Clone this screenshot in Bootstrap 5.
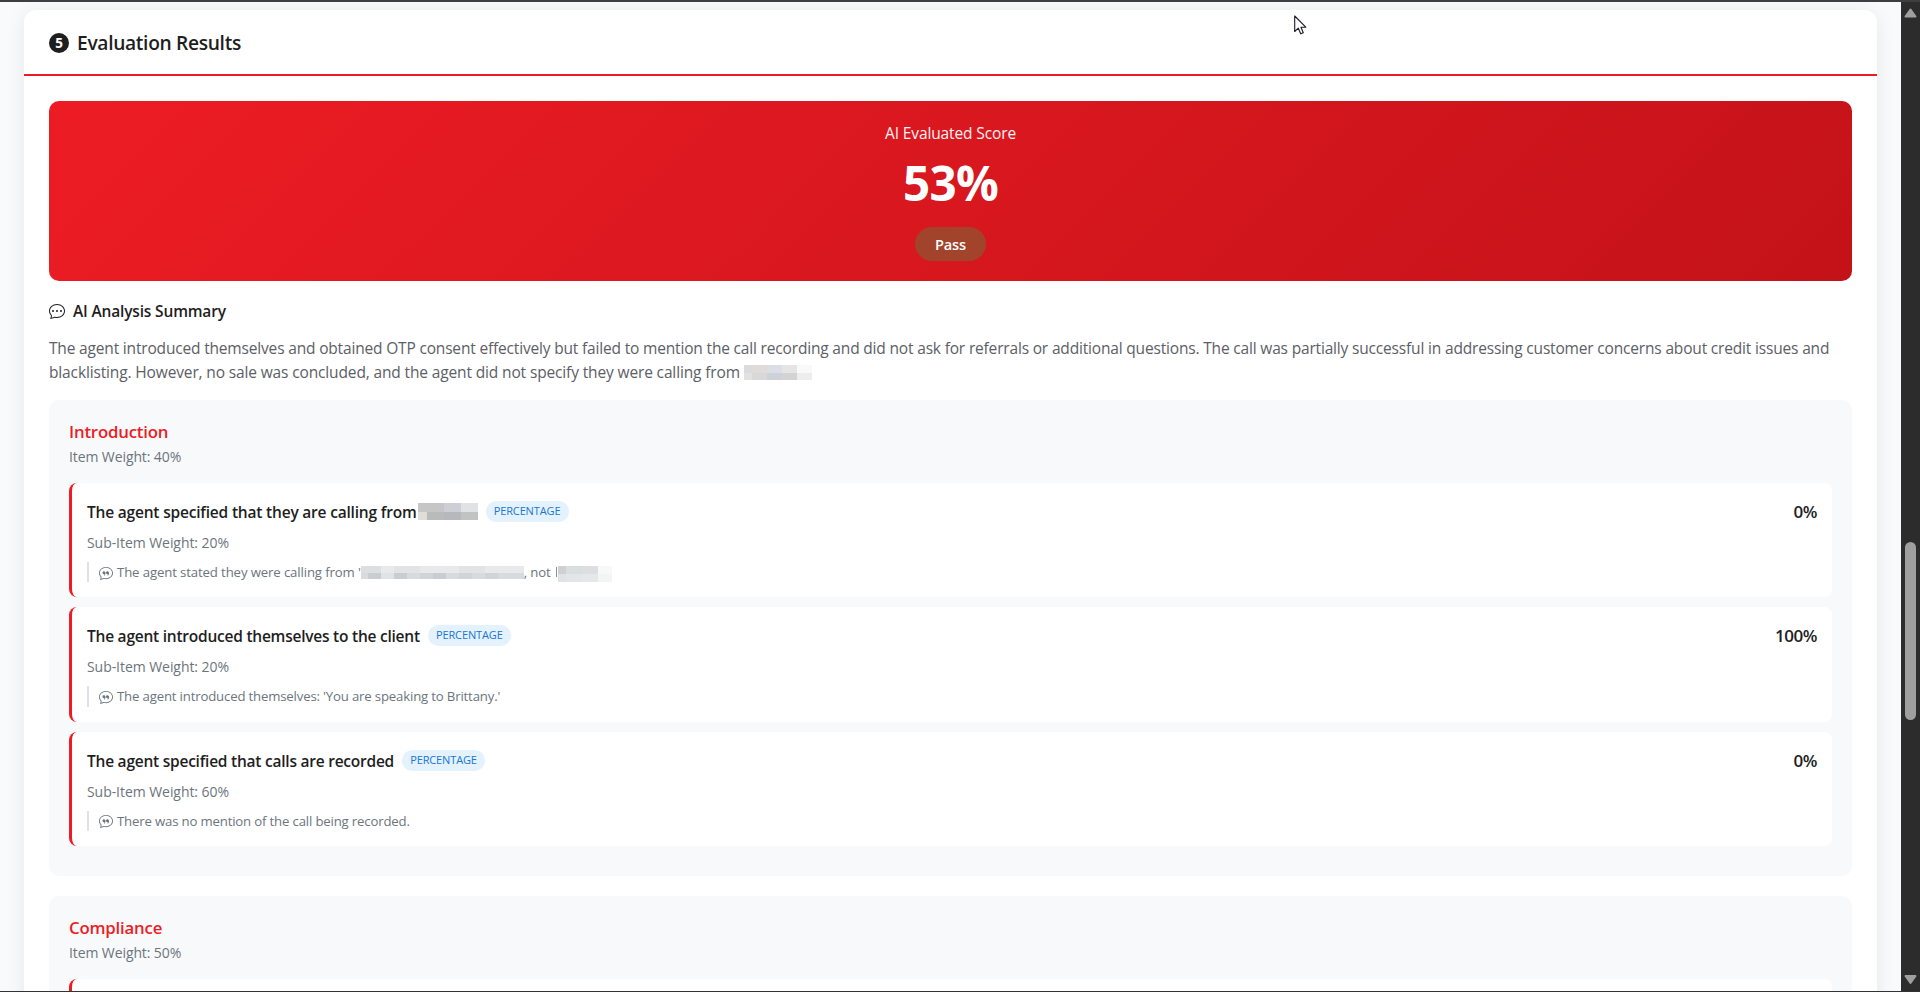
<!DOCTYPE html>
<html lang="en">
<head>
<meta charset="utf-8">
<meta name="viewport" content="width=device-width, initial-scale=1">
<title>Evaluation Results</title>
<link href="https://cdn.jsdelivr.net/npm/bootstrap@5.3.0/dist/css/bootstrap.min.css" rel="stylesheet">
<style>
:root{--brand:#ed1c24;--brand-dark:#c41219;--soft:#f8f9fb;--ink:#1e1e1e;--muted:#6c757d}
body{font-family:"Open Sans","Noto Sans",sans-serif;background:#f8fafc;color:var(--ink);height:992px;overflow:hidden;border-top:2px solid #3f3d40;border-bottom:1px solid #333}
.page-area{padding:8px 24px 0}
.results{border:0;border-radius:12px;box-shadow:0 2px 20px rgba(0,0,0,.08);height:1200px;background:#fff}
.results-head{height:66px;border-bottom:2px solid var(--brand);padding:2px 25px 0}
.step-no{width:20px;height:20px;font-size:13.5px;line-height:20px;background:var(--ink);color:#fff}
.results-title{font-size:19.2px;font-weight:600;letter-spacing:-.32px;line-height:24px}
.results-body{padding:25px}
.score{height:180px;border-radius:10px;background:linear-gradient(135deg,var(--brand) 0%,var(--brand-dark) 100%);padding-top:20px}
.score-label{font-size:15.5px;line-height:24px;letter-spacing:-.12px;opacity:.95}
.score-value{font-size:47.5px;font-weight:700;line-height:58px;letter-spacing:-.7px;margin:9px 0 15px}
.score-pill{width:71px;height:34px;line-height:34px;border-radius:17px;background:#a2442c;font-size:14.6px;font-weight:600;letter-spacing:-.15px}
.summary-title{font-size:15.5px;font-weight:600;letter-spacing:-.17px;line-height:20px;margin-top:20px}
.summary-text{font-size:15.5px;line-height:24px;color:#5c6066;letter-spacing:-.173px;margin:15px 0 16px;white-space:nowrap}
.summary-text .line-two{letter-spacing:-.139px}
.group{background:var(--soft);border-radius:10px;padding:20px 20px 30px;margin-bottom:20px}
.group-title{font-size:16.8px;font-weight:600;color:var(--brand);line-height:22px;letter-spacing:-.19px;margin:1px 0 3px}
.group-weight{font-size:14px;line-height:21px;letter-spacing:-.1px;color:var(--muted);margin-bottom:16px}
.entry{background:#fff;border-left:3px solid var(--brand);border-radius:8px;padding:15px;height:114.4px;margin-bottom:10px}
.entry:last-child{margin-bottom:0}
.entry-head{height:27px;margin-bottom:7px}
.entry-title{font-size:15.5px;font-weight:600;line-height:26px;letter-spacing:-.235px;padding-top:1px}
.entry-title.first{letter-spacing:-.193px}
.kind{height:21px;line-height:20px;border-radius:11px;background:#e3f2fd;color:#1976d2;font-size:11px;padding:0 8px;letter-spacing:-.13px;margin:3px 0 0 8px;width:83px;text-align:center}
.entry-score{font-size:17px;font-weight:600;letter-spacing:-.45px;line-height:28px}
.entry-weight{font-size:14px;line-height:21px;letter-spacing:-.055px;color:var(--muted)}
.remark{font-size:13.2px;line-height:19.4px;color:var(--muted);letter-spacing:-.17px;border-left:2px solid #dee2e6;padding:1px 0 0 10px;height:20.4px;margin-top:9px;white-space:nowrap}
.remark.redacted{letter-spacing:-.125px}
.remark svg.icon{margin-right:4px}
svg{flex:none}
.scroller{width:19px;background:#2c2c2c}
.scroller-thumb{width:11px;height:178px;border-radius:6px;background:#9f9f9f}
.pointer{left:1294px;top:13px}
</style>
</head>
<body class="d-flex m-0 position-relative">
<svg width="0" height="0" class="position-absolute">
  <symbol id="quote" viewBox="0 0 16 16">
    <path d="M2.678 11.894a1 1 0 0 1 .287.801 11 11 0 0 1-.398 2c1.395-.323 2.247-.697 2.634-.893a1 1 0 0 1 .71-.074A8 8 0 0 0 8 14c3.996 0 7-2.807 7-6s-3.004-6-7-6-7 2.808-7 6c0 1.468.617 2.83 1.678 3.894m-.493 3.905a22 22 0 0 1-.713.129c-.2.032-.352-.176-.273-.362a10 10 0 0 0 .244-.637l.003-.01c.248-.72.45-1.548.524-2.319C.743 11.37 0 9.76 0 8c0-3.866 3.582-7 8-7s8 3.134 8 7-3.582 7-8 7a9 9 0 0 1-2.347-.306c-.52.263-1.639.742-3.468 1.105"/>
    <path d="M7.066 6.76A1.665 1.665 0 0 0 4 7.668a1.667 1.667 0 0 0 2.561 1.406c-.131.389-.375.804-.777 1.22a.417.417 0 0 0 .6.58c1.486-1.54 1.293-3.214.682-4.112zm4 0A1.665 1.665 0 0 0 8 7.668a1.667 1.667 0 0 0 2.561 1.406c-.131.389-.375.804-.777 1.22a.417.417 0 0 0 .6.58c1.486-1.54 1.293-3.214.682-4.112z"/>
  </symbol>
</svg>

<main class="page-area flex-grow-1 overflow-hidden">
  <section class="card results">
    <header class="results-head d-flex align-items-center">
      <span class="step-no rounded-circle text-center fw-bold me-2">5</span>
      <h1 class="results-title mb-0">Evaluation Results</h1>
    </header>
    <div class="results-body">
      <div class="score text-white d-flex flex-column align-items-center">
        <div class="score-label">AI Evaluated Score</div>
        <div class="score-value">53%</div>
        <div class="score-pill text-center">Pass</div>
      </div>

      <h2 class="summary-title d-flex align-items-center mb-0">
        <svg class="me-2" width="16" height="16" viewBox="0 0 16 16" fill="currentColor"><path d="M5 8a1 1 0 1 1-2 0 1 1 0 0 1 2 0m4 0a1 1 0 1 1-2 0 1 1 0 0 1 2 0m3 1a1 1 0 1 0 0-2 1 1 0 0 0 0 2"/><path d="m2.165 15.803.02-.004c1.83-.363 2.948-.842 3.468-1.105A9 9 0 0 0 8 15c4.418 0 8-3.134 8-7s-3.582-7-8-7-8 3.134-8 7c0 1.76.743 3.37 1.97 4.6a10.4 10.4 0 0 1-.524 2.318l-.003.011a11 11 0 0 1-.244.637c-.079.186.074.394.273.362a22 22 0 0 0 .693-.125m.8-3.108a1 1 0 0 0-.287-.801C1.618 10.83 1 9.468 1 8c0-3.192 3.004-6 7-6s7 2.808 7 6-3.004 6-7 6a8 8 0 0 1-2.088-.272 1 1 0 0 0-.711.074c-.387.196-1.24.57-2.634.893a11 11 0 0 0 .398-2"/></svg>
        AI Analysis Summary
      </h2>
      <div class="summary-text">
        <div>The agent introduced themselves and obtained OTP consent effectively but failed to mention the call recording and did not ask for referrals or additional questions. The call was partially successful in addressing customer concerns about credit issues and</div>
        <div class="line-two d-flex align-items-center">blacklisting. However, no sale was concluded, and the agent did not specify they were calling from
          <svg class="ms-1" width="68" height="15" shape-rendering="crispEdges"><path fill="#dbdbdb" d="M0 0h8v8H0z"/><path fill="#dfdbd8" d="M8 0h15v8H8z"/><path fill="#dbdfe5" d="M23 0h15v8H23z"/><path fill="#e5e5e5" d="M38 0h15v8H38z"/><path fill="#f9f9f9" d="M53 0h15v8H53z"/><path fill="#e1e1e0" d="M0 8h8v7H0z"/><path fill="#d8d8d8" d="M8 8h15v7H8z"/><path fill="#cdd2d8" d="M23 8h15v7H23z"/><path fill="#d3d3d3" d="M38 8h15v7H38z"/><path fill="#ededee" d="M53 8h15v7H53z"/></svg>
        </div>
      </div>

      <section class="group">
        <h3 class="group-title">Introduction</h3>
        <div class="group-weight">Item Weight: 40%</div>

        <article class="entry">
          <div class="entry-head d-flex align-items-start">
            <h4 class="entry-title first mb-0">The agent specified that they are calling from</h4>
            <svg class="mt-1" style="margin-left:1px" width="60" height="19" shape-rendering="crispEdges"><g transform="translate(0 1)"><path fill="#c7c6c6" d="M0 0h26v9H0z"/><path fill="#cdced6" d="M26 0h17v9H26z"/><path fill="#e1e2e4" d="M43 0h17v9H43z"/><path fill="#e0dcda" d="M0 9h9v8H0z"/><path fill="#b9bbbb" d="M9 9h17v8H9z"/><path fill="#b7b8bc" d="M26 9h17v8H26z"/><path fill="#c0c3c2" d="M43 9h17v8H43z"/></g></svg>
            <span class="kind">PERCENTAGE</span>
            <span class="entry-score ms-auto">0%</span>
          </div>
          <div class="entry-weight">Sub-Item Weight: 20%</div>
          <div class="remark redacted d-flex align-items-center"><svg class="icon" width="14" height="14" fill="currentColor"><use href="#quote"/></svg>The agent stated they were calling from '
            <svg width="163" height="13" shape-rendering="crispEdges"><path fill="#e7e9ea" d="M0 0h163v7H0z"/><path fill="#dcdfe0" d="M0 0h20v7H0z"/><path fill="#e2e3e5" d="M33 0h26v7H33zM98 0h26v7H98z"/><path fill="#d8dadd" d="M0 7h163v6H0z"/><path fill="#c9ccd0" d="M7 7h13v6H7zM33 7h13v6H33zM72 7h13v6H72z"/><path fill="#e1e2e3" d="M20 7h13v6H20z"/><path fill="#d1d4d7" d="M59 7h13v6H59zM98 7h13v6H98zM124 7h13v6h-13z"/></svg>, not
            <svg width="60" height="18" shape-rendering="crispEdges" style="margin-left:5px"><path fill="#8c9299" d="M0 3h1v10H0z"/><g transform="translate(2 2)"><path fill="#d0d0d1" d="M0 0h8v8H0z"/><path fill="#d9dee0" d="M8 0h16v8H8z"/><path fill="#dddedf" d="M24 0h16v8H24z"/><path fill="#f7f9f9" d="M40 0h14v8H40z"/><path fill="#dfe3e4" d="M0 8h8v8H0z"/><path fill="#e1e6e9" d="M8 8h16v8H8z"/><path fill="#e6e7e8" d="M24 8h16v8H24z"/><path fill="#f3f4f4" d="M40 8h14v8H40z"/></g></svg>
          </div>
        </article>

        <article class="entry">
          <div class="entry-head d-flex align-items-start">
            <h4 class="entry-title mb-0">The agent introduced themselves to the client</h4>
            <span class="kind">PERCENTAGE</span>
            <span class="entry-score ms-auto">100%</span>
          </div>
          <div class="entry-weight">Sub-Item Weight: 20%</div>
          <div class="remark d-flex align-items-center"><svg class="icon" width="14" height="14" fill="currentColor"><use href="#quote"/></svg>The agent introduced themselves: 'You are speaking to Brittany.'</div>
        </article>

        <article class="entry">
          <div class="entry-head d-flex align-items-start">
            <h4 class="entry-title mb-0">The agent specified that calls are recorded</h4>
            <span class="kind">PERCENTAGE</span>
            <span class="entry-score ms-auto">0%</span>
          </div>
          <div class="entry-weight">Sub-Item Weight: 60%</div>
          <div class="remark d-flex align-items-center"><svg class="icon" width="14" height="14" fill="currentColor"><use href="#quote"/></svg>There was no mention of the call being recorded.</div>
        </article>
      </section>

      <section class="group">
        <h3 class="group-title">Compliance</h3>
        <div class="group-weight">Item Weight: 50%</div>
        <article class="entry"></article>
      </section>
    </div>
  </section>
</main>

<aside class="scroller d-flex flex-column align-items-center flex-shrink-0 pt-1 pb-1">
  <svg width="13" height="14" viewBox="0 0 13 14"><path d="M6.500 3.500 11.500 10.500H1.500z" fill="#9f9f9f" stroke="#9f9f9f" stroke-width="2" stroke-linejoin="round"/></svg>
  <div class="scroller-thumb" style="margin-top:522px"></div>
  <svg class="mt-auto" width="13" height="13" viewBox="0 0 13 13"><path d="M6.500 9 11.500 2H1.500z" fill="#9f9f9f" stroke="#9f9f9f" stroke-width="2" stroke-linejoin="round"/></svg>
</aside>

<svg class="pointer position-absolute" width="13" height="20" viewBox="0 0 13 20"><path d="M.7 1v15.500l3.600-3.300 2.400 5.600 2.600-1.100L7 12.200h4.800z" fill="#fff" stroke="#1b1b28" stroke-width="1.100" stroke-linejoin="round"/></svg>

<script src="https://cdn.jsdelivr.net/npm/bootstrap@5.3.0/dist/js/bootstrap.bundle.min.js"></script>
</body>
</html>
